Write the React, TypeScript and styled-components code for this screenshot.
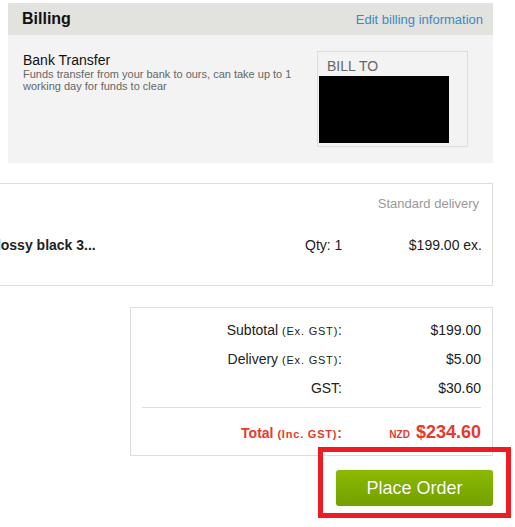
import React from 'react';
import styled, { createGlobalStyle } from 'styled-components';

const GlobalStyle = createGlobalStyle`
  html, body {
    margin: 0;
    padding: 0;
    background: #ffffff;
    overflow: hidden;
  }
  body {
    font-family: "Liberation Sans", Arial, sans-serif;
    color: #222;
  }
`;

const Page = styled.div`
  width: 485px;
  margin-left: 8px;
  padding: 3px 0 24px;
`;

const Panel = styled.section`
  background: #f3f3f3;
`;

const PanelHeader = styled.div`
  height: 32px;
  background: #e2e2de;
  display: flex;
  align-items: center;
  justify-content: space-between;
  padding: 0 10px 0 14px;
`;

const PanelTitle = styled.h2`
  margin: 0;
  font-size: 16px;
  font-weight: bold;
  color: #111;
`;

const EditLink = styled.a`
  font-size: 13px;
  color: #3b8ac4;
  text-decoration: none;
`;

const PanelBody = styled.div`
  height: 128px;
  display: flex;
  justify-content: space-between;
  padding: 16px 25px 0 15px;
  box-sizing: border-box;
`;

const Method = styled.div`
  padding-top: 1px;
  width: 290px;
`;

const MethodName = styled.div`
  font-size: 14px;
  color: #111;
  line-height: 16px;
`;

const MethodNote = styled.div`
  font-size: 11px;
  line-height: 12px;
  color: #666;
`;

const BillTo = styled.div`
  width: 151px;
  height: 96px;
  box-sizing: border-box;
  border: 1px solid #dddddd;
  padding: 6px 0 0 1px;
`;

const BillToLabel = styled.div`
  font-size: 14px;
  color: #666;
  padding-left: 8px;
  line-height: 16px;
  margin-bottom: 2px;
`;

const Redacted = styled.div`
  width: 130px;
  height: 67px;
  background: #000;
`;

const Items = styled.div`
  margin: 20px 0 0 -43px;
  width: 528px;
  height: 103px;
  box-sizing: border-box;
  border: 1px solid #dddddd;
  padding: 12px 10px 0 0;
  background: #fff;
`;

const DeliveryLabel = styled.div`
  text-align: right;
  font-size: 13px;
  color: #999;
  padding-right: 3px;
`;

const ItemRow = styled.div`
  display: grid;
  grid-template-columns: 1fr 100px 77px;
  align-items: center;
  margin-top: 26px;
  font-size: 14px;
`;

const ItemName = styled.div`
  font-weight: bold;
  font-size: 14px;
  padding-left: 20px;
  white-space: nowrap;
  overflow: hidden;
  text-overflow: ellipsis;
`;

const ItemQty = styled.div`
  color: #222;
`;

const ItemPrice = styled.div`
  text-align: right;
  color: #222;
  white-space: nowrap;
`;

const Totals = styled.div`
  margin: 21px 0 0 122px;
  width: 363px;
  box-sizing: border-box;
  border: 1px solid #dddddd;
  padding: 7px 11px 8px 11px;
`;

const TotalRow = styled.div<{ $total?: boolean }>`
  display: grid;
  grid-template-columns: 200px 1fr;
  height: 29px;
  align-items: center;
  font-size: 14px;
  color: ${p => (p.$total ? '#e8392a' : '#222')};
`;

const TotalLabel = styled.div<{ $bold?: boolean }>`
  text-align: right;
  font-weight: ${p => (p.$bold ? 'bold' : 'normal')};
`;

const TotalValue = styled.div`
  text-align: right;
`;

const Note = styled.span<{ $bold?: boolean }>`
  font-size: 11px;
  letter-spacing: 0.8px;
  font-weight: ${p => (p.$bold ? 'bold' : 'normal')};
`;

const Currency = styled.span`
  font-size: 10px;
  font-weight: bold;
  margin-right: 6px;
`;

const Grand = styled.span`
  font-size: 18px;
  font-weight: bold;
`;

const Divider = styled.hr`
  border: 0;
  border-top: 1px solid #dddddd;
  margin: 5px 0 10px;
`;

const Actions = styled.div`
  display: flex;
  justify-content: flex-end;
  margin-top: 14px;
`;

const ButtonWrap = styled.div`
  position: relative;
`;

const Highlight = styled.div`
  position: absolute;
  left: -18px;
  top: -23px;
  right: -18px;
  bottom: -12px;
  border: 5px solid #ed1c24;
  pointer-events: none;
`;

const PlaceOrder = styled.button`
  display: block;
  width: 157px;
  height: 36px;
  border: 0;
  border-radius: 3px;
  background: linear-gradient(#8cba00, #74a000);
  color: #fff;
  font-family: "Liberation Sans", Arial, sans-serif;
  font-size: 18px;
  text-shadow: 0 0 1px rgba(0, 0, 0, 0.2);
  cursor: pointer;
  box-shadow: 0 0 2px rgba(0, 0, 0, 0.15);
`;

const App: React.FC = () => {
  return (
    <>
      <GlobalStyle />
      <Page>
        <Panel>
          <PanelHeader>
            <PanelTitle>Billing</PanelTitle>
            <EditLink href="#">Edit billing information</EditLink>
          </PanelHeader>
          <PanelBody>
            <Method>
              <MethodName>Bank Transfer</MethodName>
              <MethodNote>
                Funds transfer from your bank to ours, can take up to 1 working day for funds to clear
              </MethodNote>
            </Method>
            <BillTo>
              <BillToLabel>BILL TO</BillToLabel>
              <Redacted />
            </BillTo>
          </PanelBody>
        </Panel>

        <Items>
          <DeliveryLabel>Standard delivery</DeliveryLabel>
          <ItemRow>
            <ItemName>Glossy black 3...</ItemName>
            <ItemQty>Qty: 1</ItemQty>
            <ItemPrice>$199.00 ex.</ItemPrice>
          </ItemRow>
        </Items>

        <Totals>
          <TotalRow>
            <TotalLabel>Subtotal <Note>(Ex. GST)</Note>:</TotalLabel>
            <TotalValue>$199.00</TotalValue>
          </TotalRow>
          <TotalRow>
            <TotalLabel>Delivery <Note>(Ex. GST)</Note>:</TotalLabel>
            <TotalValue>$5.00</TotalValue>
          </TotalRow>
          <TotalRow>
            <TotalLabel>GST:</TotalLabel>
            <TotalValue>$30.60</TotalValue>
          </TotalRow>
          <Divider />
          <TotalRow $total>
            <TotalLabel $bold>
              Total <Note $bold>(Inc. GST)</Note>:
            </TotalLabel>
            <TotalValue>
              <Currency>NZD</Currency>
              <Grand>$234.60</Grand>
            </TotalValue>
          </TotalRow>
        </Totals>

        <Actions>
          <ButtonWrap>
            <PlaceOrder>Place Order</PlaceOrder>
            <Highlight />
          </ButtonWrap>
        </Actions>
      </Page>
    </>
  );
};

export default App;
